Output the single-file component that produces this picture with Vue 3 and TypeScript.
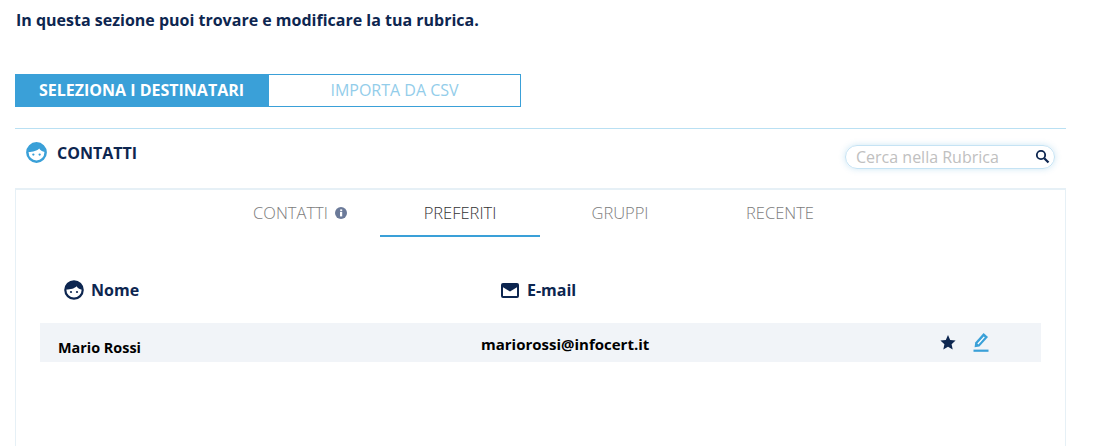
<script setup lang="ts">
const tabs = [
  { label: 'CONTATTI', info: true, active: false },
  { label: 'PREFERITI', info: false, active: true },
  { label: 'GRUPPI', info: false, active: false },
  { label: 'RECENTE', info: false, active: false },
]
</script>

<template>
  <main class="page">
    <p class="intro">In questa sezione puoi trovare e modificare la tua rubrica.</p>

    <div class="switch">
      <button class="switch-btn on">SELEZIONA I DESTINATARI</button>
      <button class="switch-btn">IMPORTA DA CSV</button>
    </div>

    <header class="section-head">
      <div class="section-title">
        <svg class="face" width="21" height="21" viewBox="0 0 20 20">
          <circle cx="10" cy="10" r="8.7" fill="#fff" stroke="currentColor" stroke-width="2.4" />
          <path d="M2 9.5C2 4 6 1.2 10 1.2S18 4 18 9.5C15.5 9.3 13.5 8 12.6 6.2 11 8.2 6 9.6 2 9.5Z" fill="currentColor" />
          <circle cx="7" cy="12" r="1.1" fill="currentColor" />
          <circle cx="13" cy="12" r="1.1" fill="currentColor" />
        </svg>
        <span>CONTATTI</span>
      </div>
      <div class="search">
        <span class="placeholder">Cerca nella Rubrica</span>
        <svg width="15" height="15" viewBox="0 0 14 14" fill="none" stroke="#0d2650">
          <circle cx="5.6" cy="5.6" r="3.9" stroke-width="1.7" />
          <path d="M8.6 8.6L12.6 12.6" stroke-width="2.1" />
        </svg>
      </div>
    </header>

    <section class="card">
      <nav class="tabs">
        <div v-for="t in tabs" :key="t.label" class="tab" :class="{ active: t.active }">
          <span>{{ t.label }}</span>
          <svg v-if="t.info" width="12" height="12" viewBox="0 0 12 12">
            <circle cx="6" cy="6" r="6" fill="#6b7a99" />
            <rect x="5" y="5" width="2.2" height="4.4" fill="#fff" />
            <rect x="5.2" y="2.4" width="2" height="1.8" fill="#fff" />
          </svg>
        </div>
      </nav>

      <div class="thead">
        <div class="th name-col">
          <svg width="20" height="20" viewBox="0 0 20 20" class="navy">
            <circle cx="10" cy="10" r="8.7" fill="#fff" stroke="currentColor" stroke-width="2.2" />
            <path d="M2 9.5C2 4 6 1.2 10 1.2S18 4 18 9.5C15.5 9.3 13.5 8 12.6 6.2 11 8.2 6 9.6 2 9.5Z" fill="currentColor" />
            <circle cx="7" cy="12" r="1.1" fill="currentColor" />
            <circle cx="13" cy="12" r="1.1" fill="currentColor" />
          </svg>
          <span>Nome</span>
        </div>
        <div class="th">
          <svg width="18" height="15" viewBox="0 0 18 15">
            <rect width="18" height="15" rx="2" fill="#0d2650" />
            <path d="M2 4.2L9 8.6 16 4.2V13H2Z" fill="#fff" />
          </svg>
          <span>E-mail</span>
        </div>
      </div>

      <div class="row">
        <span class="cell-name">Mario Rossi</span>
        <span class="cell-mail">mariorossi@infocert.it</span>
        <div class="actions">
          <svg width="16" height="15" viewBox="0 0 16 15">
            <path d="M8 0L10.2 5 15.6 5.6 11.6 9.2 12.7 14.6 8 11.8 3.3 14.6 4.4 9.2 0.4 5.6 5.8 5Z" fill="#0d2650" />
          </svg>
          <svg width="16" height="20" viewBox="0 0 16 20">
            <path d="M1.6 15.2L2.2 10.6 10.6 1 15 5 6.4 14.6Z" fill="#3aa0d8" />
            <path d="M4.4 11.4L10.8 4.4 11.8 5.3 5.4 12.4Z" fill="#fff" />
            <rect x="0.5" y="17.6" width="15" height="2.2" fill="#3aa0d8" />
          </svg>
        </div>
      </div>
    </section>
  </main>
</template>

<style>
html, body { margin: 0; background: #fff; overflow: hidden; }
</style>

<style scoped>
.page {
  width: 1111px;
  height: 447px;
  box-sizing: border-box;
  padding: 0 45px 0 15px;
  font-family: "Open Sans", sans-serif;
  color: #0d2650;
  overflow: hidden;
}
.intro {
  margin: 0;
  padding: 10px 0 0 1px;
  font-size: 16px;
  font-weight: 700;
  line-height: 21px;
  height: 64px;
}
.switch { display: flex; width: 506px; height: 33px; }
.switch-btn {
  width: 253px;
  box-sizing: border-box;
  padding: 0;
  font: 400 16px/29px "Open Sans", sans-serif;
  color: #93cdea;
  background: #fff;
  border: 1px solid #3aa0d8;
}
.switch-btn.on {
  font-weight: 700;
  color: #fff;
  background: #3aa0d8;
  border: 0;
}
.section-head {
  display: flex;
  align-items: center;
  justify-content: space-between;
  margin-top: 21px;
  height: 60px;
  box-sizing: border-box;
  border-top: 1px solid #b9e0f3;
  padding: 0 11px 4px 11px;
}
.section-title {
  display: flex;
  align-items: center;
  gap: 10px;
  font-size: 16px;
  font-weight: 700;
  margin-top: -8px;
}
.face { color: #3aa0d8; }
.search {
  width: 210px;
  height: 24px;
  box-sizing: border-box;
  display: flex;
  align-items: center;
  justify-content: space-between;
  padding: 0 4px 0 10px;
  border: 1px solid #c5e3f4;
  border-radius: 12px;
  box-shadow: 0 0 6px rgba(58, 160, 216, 0.25);
}
.placeholder { font-size: 16px; color: #c0c0c0; }
.card {
  height: 258px;
  box-sizing: border-box;
  border: 1px solid #e6f0f6;
  border-top-width: 2px;
  border-bottom: 0;
  padding: 0 24px;
}
.tabs { display: flex; justify-content: center; margin-right: 1px; }
.tab {
  width: 160px;
  height: 47px;
  box-sizing: border-box;
  display: flex;
  align-items: center;
  justify-content: center;
  gap: 7px;
  font-size: 16.5px;
  font-weight: 300;
  color: #7c7c7c;
  border-bottom: 2px solid transparent;
}
.tab.active { color: #333; border-bottom-color: #3aa0d8; }
.thead { display: flex; margin-top: 41px; padding-left: 24px; }
.th {
  display: flex;
  align-items: center;
  gap: 8px;
  font-size: 16px;
  font-weight: 700;
  height: 24px;
}
.name-col { width: 437px; gap: 7px; }
.navy { color: #0d2650; }
.row {
  position: relative;
  display: flex;
  align-items: center;
  height: 39px;
  margin-top: 21px;
  background: #f1f4f8;
  font-size: 14.4px;
  font-weight: 700;
  color: #000;
}
.cell-name { width: 441px; padding: 10px 0 0 18px; box-sizing: border-box; line-height: 30px; }
.cell-mail { width: 459px; font-size: 15px; line-height: 30px; margin-top: 3px; }
.actions { display: flex; align-items: center; gap: 17px; margin-top: -1px; }
</style>
